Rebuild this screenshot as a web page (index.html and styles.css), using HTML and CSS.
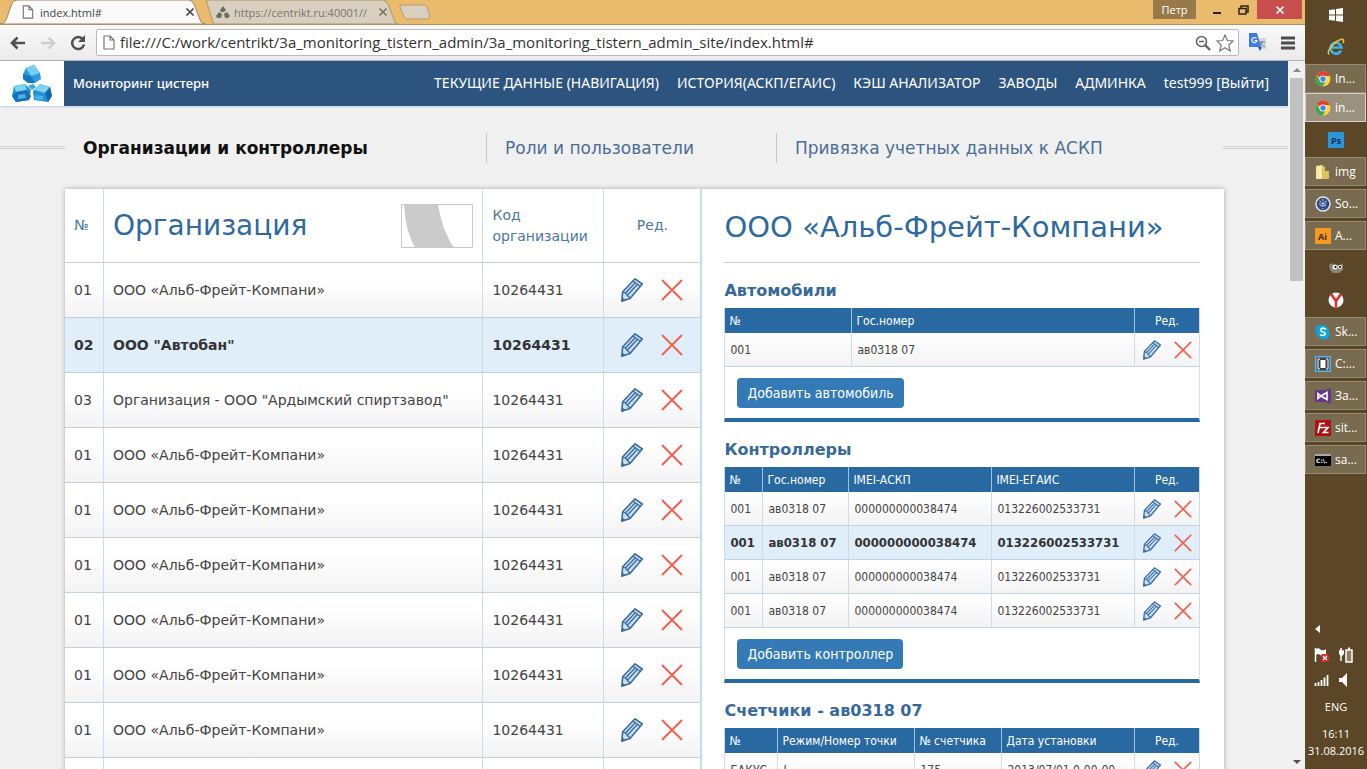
FILE: index.html
```html
<!DOCTYPE html>
<html lang="ru">
<head>
<meta charset="utf-8">
<title>Мониторинг цистерн</title>
<link rel="stylesheet" href="styles.css">
</head>
<body>
<svg class="sprite" aria-hidden="true">
  <symbol id="pencil" viewBox="0 0 22 24">
    <path d="M1.700 13.700 14 .8 21.300 6 9 20.500 .8 23.200Z" fill="#c9deef" stroke="#3a6c9e" stroke-width="1.600" stroke-linejoin="round"/>
    <path d="M12 3 19 8.300" fill="none" stroke="#3a6c9e" stroke-width="1.300"/>
    <path d="M4.500 15 14 5M6.500 17 16.300 6.500M2 14 4.500 15 6.500 17.500 9 20" fill="none" stroke="#3a6c9e" stroke-width="1.300"/>
    <path d="M.8 23.200 1.200 19.500 4.500 22Z" fill="#3a6c9e"/>
  </symbol>
  <symbol id="cross" viewBox="0 0 22 22"><path d="M1 1 21 21M21 1 1 21" fill="none" stroke="#f4604f" stroke-width="2"/></symbol>
  <symbol id="page" viewBox="0 0 12 15"><path d="M1 1H7L11 5V14H1ZM7 1V5H11" fill="#fff" stroke="#777" stroke-width="1.200"/></symbol>
  <symbol id="close" viewBox="0 0 10 10"><path d="M1.500 1.500 8.500 8.500M8.500 1.500 1.500 8.500" stroke="currentColor" stroke-width="1.700"/></symbol>
  <symbol id="chrome" viewBox="0 0 16 16">
    <circle cx="8" cy="8" r="7.500" fill="#ffd13b"/>
    <path d="M8 8 1.500 4.250A7.500 7.500 0 0 1 14.500 4.250L15 5H8Z" fill="#e04234"/>
    <path d="M1.500 4.250A7.500 7.500 0 0 0 7.700 15.500L10.800 10 8 8 5.300 9.500Z" fill="#3fa455"/>
    <circle cx="8" cy="8" r="3.600" fill="#fff"/><circle cx="8" cy="8" r="2.700" fill="#4286e8"/>
  </symbol>
</svg>

<div class="browser">
  <div class="tabstrip">
    <button class="btab on"><svg viewBox="0 0 212 24" preserveAspectRatio="none"><path d="M0 24Q5 24 7 18L12 4Q13 0 18 0H194Q198 0 200 5L206 20Q207 24 212 24Z" fill="#f9f9f9" stroke="#9b8560"/></svg><span class="btab-in"><svg width="12" height="14"><use href="#page"/></svg><span class="btab-name">index.html#</span><svg width="10" height="10"><use href="#close"/></svg></span></button>
    <button class="btab"><svg viewBox="0 0 200 24" preserveAspectRatio="none"><path d="M0 0H184Q188 0 190 5L196 20Q197 24 200 24H8Z" fill="#d8cfbe" stroke="#a8936b"/></svg><span class="btab-in"><svg width="14" height="14" viewBox="0 0 14 14"><path d="M4 5 7 1 10 5 8 7H5ZM0 11 3 7 6 9 5 13H1ZM8 9 11 7 14 11 12 13H9Z" fill="#6a6a66"/></svg><span class="btab-name">https://centrikt.ru:40001//</span><svg width="10" height="10"><use href="#close"/></svg></span></button>
    <button class="newtab" aria-label="Новая вкладка"><svg width="32" height="16" viewBox="0 0 32 16"><path d="M1 1H25Q27 1 28 3L31 13Q31 15 29 15H9Q6 15 5 13L1 3Z" fill="#d8cfbe" stroke="#b99a66"/></svg></button>
    <div class="win">
      <button class="user">Петр</button>
      <button class="wbtn" aria-label="Свернуть"><svg width="10" height="10"><path d="M1 8H9" stroke="#2d2415" stroke-width="2"/></svg></button>
      <button class="wbtn" aria-label="Развернуть"><svg width="11" height="10"><path d="M3 3V1H10V7H8M1 3.500H8V9H1Z" fill="none" stroke="#2d2415" stroke-width="1.500"/></svg></button>
      <button class="wclose" aria-label="Закрыть"><svg width="10" height="10"><use href="#close"/></svg></button>
    </div>
  </div>

  <div class="toolbar">
    <button aria-label="Назад"><svg width="16" height="14"><path d="M15 7H2M7.500 1.500 2 7 7.500 12.500" fill="none" stroke="#505050" stroke-width="2.600"/></svg></button>
    <button aria-label="Вперед"><svg width="16" height="14"><path d="M1 7H14M8.500 1.500 14 7 8.500 12.500" fill="none" stroke="#cdcdcd" stroke-width="2.400"/></svg></button>
    <button aria-label="Обновить"><svg width="16" height="16"><path d="M13 4.500A6 6 0 1 0 14 9.500" fill="none" stroke="#505050" stroke-width="2.500"/><path d="M15 0V7H8Z" fill="#505050"/></svg></button>
    <div class="address">
      <svg width="12" height="15"><use href="#page"/></svg>
      <input aria-label="Адрес" value="file:///C:/work/centrikt/3a_monitoring_tistern_admin/3a_monitoring_tistern_admin_site/index.html#">
      <svg width="16" height="16"><circle cx="6.500" cy="6.500" r="5" fill="none" stroke="#606060" stroke-width="1.600"/><path d="M4 6.500H9" stroke="#606060" stroke-width="1.500"/><path d="M10 10 15 15" stroke="#606060" stroke-width="2.400"/></svg>
      <svg width="18" height="18" viewBox="0 0 18 18"><path d="M9 1 11.400 6.500 17.200 7 12.800 11 14.200 17 9 13.800 3.800 17 5.200 11 .8 7 6.600 6.500Z" fill="none" stroke="#777" stroke-width="1.200"/></svg>
    </div>
    <button aria-label="Переводчик"><svg width="19" height="19" viewBox="0 0 19 19"><path d="M9 5H18V16H11Z" fill="#d3d6da"/><path d="M11 9H17M14 8V9Q13 13 10 14M12 10Q14 13 17 14" fill="none" stroke="#6b7e92"/><path d="M1 0H9L13 14H1Z" fill="#3e7be6"/><path d="M10 14H14L12 18Z" fill="#2b57b5"/><path d="M8.500 5.500A2.600 2.600 0 1 0 9 7.500H6.500" fill="none" stroke="#fff" stroke-width="1.200"/></svg></button>
    <button aria-label="Меню"><svg width="14" height="14"><path d="M0 2H14M0 7H14M0 12H14" stroke="#4d4d4d" stroke-width="3"/></svg></button>
  </div>

  <div class="viewport">
    <div class="site">
      <header class="head">
        <a class="logo" href="#" aria-label="Главная"><svg width="42" height="38" viewBox="0 0 42 38">
          <path d="M15 3 23 0 29 8 30 14 24 18 17 18 12 14 12 9Z" fill="#2b9ade"/><path d="M15 3 23 0 29 8 20 11Z" fill="#76cdf6"/><path d="M12 9 20 11 24 18 17 18 12 14Z" fill="#1878bd"/>
          <path d="M3 21 14 19 20 25 18 35 5 37 1 31Z" fill="#2590d6"/><path d="M3 21 14 19 16 25 5 27Z" fill="#7ed1f7"/><path d="M5 27 16 25 20 31 18 35 5 37 1 31Z" fill="#176fb5"/><path d="M7 30 14 29 15 33 7 34Z" fill="#45b2ea"/>
          <path d="M22 26 29 19 39 22 41 31 37 37 23 35Z" fill="#2590d6"/><path d="M23 25 29 19 39 22 34 28Z" fill="#7ed1f7"/><path d="M34 28 39 22 41 31 37 37Z" fill="#1467aa"/><path d="M24 30 32 31 32 35 24 34Z" fill="#45b2ea"/>
          <path d="M17 21 22 19 25 22 21 25Z" fill="#3ba5e0"/>
        </svg></a>
        <span class="brand">Мониторинг цистерн</span>
        <nav class="menu">
          <a href="#">ТЕКУЩИЕ ДАННЫЕ (НАВИГАЦИЯ)</a><a href="#">ИСТОРИЯ(АСКП/ЕГАИС)</a><a href="#">КЭШ АНАЛИЗАТОР</a><a href="#">ЗАВОДЫ</a><a href="#">АДМИНКА</a><a href="#">test999 [Выйти]</a>
        </nav>
      </header>

      <nav class="sections">
        <i class="rule"></i>
        <a class="on" href="#">Организации и контроллеры</a>
        <a class="roles" href="#">Роли и пользователи</a>
        <a class="binding" href="#">Привязка учетных данных к АСКП</a>
        <i class="rule"></i>
      </nav>

      <main class="panel">
        <table class="orgs">
          <colgroup><col class="o1"><col><col class="o3"><col class="o4"></colgroup>
          <thead><tr><th>№</th><th><div class="orghead"><span>Организация</span><svg width="72" height="44" viewBox="0 0 72 44"><path d="M3 0H37Q41 26 53 44H14Q4 26 3 0Z" fill="#cbcbcb"/><path d="M.5 .5H71.500V43.500H.5Z" fill="none" stroke="#c8c8c8"/></svg></div></th><th>Код организации</th><th class="mid">Ред.</th></tr></thead>
          <tbody id="orgs"></tbody>
        </table>

        <div class="detail">
          <h1>ООО «Альб-Фрейт-Компани»</h1>
          <section>
            <h2>Автомобили</h2>
            <table class="grid">
              <colgroup><col class="w127"><col><col class="w65"></colgroup>
              <thead><tr><th>№</th><th>Гос.номер</th><th class="mid">Ред.</th></tr></thead>
              <tbody id="cars"></tbody>
            </table>
            <div class="foot"><button class="add">Добавить автомобиль</button></div>
          </section>
          <section>
            <h2>Контроллеры</h2>
            <table class="grid">
              <colgroup><col class="w38"><col class="w86"><col class="w143"><col><col class="w65"></colgroup>
              <thead><tr><th>№</th><th>Гос.номер</th><th>IMEI-АСКП</th><th>IMEI-ЕГАИС</th><th class="mid">Ред.</th></tr></thead>
              <tbody id="controllers"></tbody>
            </table>
            <div class="foot"><button class="add">Добавить контроллер</button></div>
          </section>
          <section>
            <h2>Счетчики - ав0318 07</h2>
            <table class="grid">
              <colgroup><col class="w53"><col class="w137"><col class="w87"><col><col class="w65"></colgroup>
              <thead><tr><th>№</th><th>Режим/Номер точки</th><th>№ счетчика</th><th>Дата установки</th><th class="mid">Ред.</th></tr></thead>
              <tbody id="counters"></tbody>
            </table>
          </section>
        </div>
      </main>
    </div>
    <div class="scroll"><svg width="8" height="4"><path d="M0 4 4 0 8 4Z" fill="#8a8a8a"/></svg><i class="thumb"></i><svg width="8" height="4"><path d="M0 0H8L4 4Z" fill="#505050"/></svg></div>
  </div>
</div>

<aside class="taskbar">
  <button aria-label="Пуск"><svg width="14" height="14"><path d="M0 2 6 1.200V6.500H0ZM7 1 14 0V6.500H7ZM0 7.500H6V12.800L0 12ZM7 7.500H14V14L7 13Z" fill="#fff"/></svg></button>
  <button aria-label="Internet Explorer"><svg width="18" height="18" viewBox="0 0 18 18"><path d="M14 12.500A5.500 5.500 0 1 1 14.500 9.500H5" fill="none" stroke="#3db3ec" stroke-width="2.700"/><path d="M2 16.500C-1 13 8 3 14 1.500 17 .8 17 3 16 5" fill="none" stroke="#f1c53a" stroke-width="1.500"/></svg></button>
  <button class="app joined"><svg width="16" height="16"><use href="#chrome"/></svg>In...</button>
  <button class="app on"><svg width="16" height="16"><use href="#chrome"/></svg>in...</button>
  <button aria-label="Photoshop"><svg width="16" height="16"><rect width="16" height="16" rx="1" fill="#2a96dc"/><text x="3" y="12" class="glyph navy">Ps</text></svg></button>
  <button class="app"><svg width="16" height="16"><path d="M1 2 7 1V15H1Z" fill="#f3e7a0"/><path d="M7 1 10 3V7H14V15H7Z" fill="#d9c55f"/><path d="M5 3V14" stroke="#fff6c4"/></svg>img</button>
  <button class="app"><svg width="16" height="16"><circle cx="8" cy="8" r="7" fill="#29467f" stroke="#dfe5ef" stroke-width="1.500"/><path d="M8 3V13M3.500 8H12.500M4.500 5 11.500 11M11.500 5 4.500 11" stroke="#b9c8e4" stroke-width="1.200" stroke-dasharray="2 1"/></svg>So...</button>
  <button class="app"><svg width="16" height="16"><rect width="16" height="16" rx="1" fill="#f49a20"/><text x="3" y="12" class="glyph brown">Ai</text></svg>A...</button>
  <button aria-label="GIMP"><svg width="16" height="12"><path d="M1 3 4 1 6 3H12L15 1V8L11 11H5L2 8Z" fill="#8b8678"/><circle cx="7" cy="5" r="2.500" fill="#eee"/><circle cx="12" cy="5" r="2" fill="#eee"/><circle cx="7.500" cy="5" r="1"/><circle cx="12" cy="5" r="1"/></svg></button>
  <button aria-label="Яндекс"><svg width="16" height="16"><circle cx="8" cy="8" r="7.500" fill="#fff"/><path d="M3 2 8 9 13 2M8 8V15" fill="none" stroke="#dd3030" stroke-width="2.600"/></svg></button>
  <button class="app"><svg width="16" height="16"><path d="M4 1Q14 0 14 8 16 12 12 15 2 16 1 8-1 3 4 1Z" fill="#08a5e6"/><path d="M11 5.500Q8 3 6 5 5 7.500 8 8 11 8.500 10 10.500 8 12.500 5 10.500" fill="none" stroke="#fff" stroke-width="1.700"/></svg>Sk...</button>
  <button class="app"><svg width="16" height="16"><rect x=".5" y=".5" width="15" height="15" fill="#3f3f42" stroke="#55b7ec" stroke-width="2"/><path d="M5 3H3V13H5M11 3H13V13H11" fill="none" stroke="#fff"/><rect x="5.500" y="4" width="5" height="8" fill="#fff"/></svg>C:...</button>
  <button class="app"><svg width="16" height="16"><path d="M0 2H11L16 0V16L11 14H0Z" fill="#67358a"/><path d="M3 5.500V10.500L6 8 12 4.500V11.500L6 8Z" fill="none" stroke="#fff" stroke-width="1.600"/></svg>За...</button>
  <button class="app"><svg width="16" height="16"><rect width="16" height="16" fill="#b30f12"/><path d="M3 13 5 3.500H10M4 7.500H8M8 7.500H13L8.500 12.500H13.500" fill="none" stroke="#fff" stroke-width="1.700"/></svg>sit...</button>
  <button class="app"><svg width="16" height="12"><rect width="16" height="12" fill="#000"/><path d="M0 1H16" stroke="#aaa" stroke-width="2"/><text x="1" y="9" class="tiny">C:\.</text></svg>sa...</button>

  <div class="tray">
    <svg class="more" width="5" height="8"><path d="M5 0V8L0 4Z" fill="#fff"/></svg>
    <div class="pair">
      <svg width="16" height="16"><path d="M1.500 1V15" stroke="#fff" stroke-width="1.500"/><path d="M2 2Q5 0 7 3 10 4 12 2V8Q9 10 6 8 4 6 2 8Z" fill="#fff"/><rect x="7" y="7" width="8" height="8" rx="1.500" fill="#d92a2a"/><path d="M9 9 13 13M13 9 9 13" stroke="#fff" stroke-width="1.300"/></svg>
      <svg width="16" height="16"><path d="M3 1V14M1 4H6" stroke="#fff" stroke-width="1.500"/><path d="M1 4H6V7L4 9H3L1 7Z" fill="#fff"/><rect x="8" y="3" width="6" height="12" fill="#8d8069" stroke="#fff" stroke-width="1.500"/><path d="M10 1.500H12" stroke="#fff" stroke-width="2"/></svg>
    </div>
    <div class="pair">
      <svg width="16" height="12"><path d="M1.500 12V9M4.500 12V8M7.500 12V6M10.500 12V3.500M13.500 12V1" stroke="#fff" stroke-width="1.800"/></svg>
      <svg width="16" height="14"><path d="M1 5H4L9 0V14L4 9H1Z" fill="#fff"/></svg>
    </div>
    <div class="lang">ENG</div>
    <div>16:11</div>
    <div>31.08.2016</div>
  </div>
</aside>
<script src="app.js"></script>
</body>
</html>
```
FILE: styles.css
```css
* { box-sizing: border-box; }
body { margin: 0; height: 100vh; display: flex; overflow: hidden; font-family: "DejaVu Sans", sans-serif; font-size: 14px; color: #444; background: #f0f0f0; }
button { border: 0; padding: 0; background: none; font: inherit; color: inherit; display: flex; align-items: center; justify-content: center; }
a { color: inherit; text-decoration: none; }
svg { display: block; flex: none; }
.sprite { position: absolute; width: 0; height: 0; }

.browser { flex: 1; min-width: 0; display: flex; flex-direction: column; }
.tabstrip { height: 25px; flex: none; display: flex; align-items: flex-end; background: #ebbb6d; border-bottom: 1px solid #a8905f; font-family: "Open Sans", sans-serif; font-size: 11px; }
.btab { position: relative; width: 206px; height: 24px; color: #444; }
.btab + .btab { width: 192px; color: #7a766d; }
.btab > svg { position: absolute; inset: 0; width: 100%; height: 100%; }
.btab-in { position: relative; display: flex; align-items: center; gap: 6px; width: 100%; padding: 0 11px 0 22px; }
.btab + .btab .btab-in { gap: 4px; padding: 0 10px; }
.btab-name { flex: 1; min-width: 0; text-align: left; white-space: nowrap; }
.newtab { padding: 0 0 4px 1px; }
.win { margin-left: auto; height: 100%; display: flex; align-items: flex-start; }
.user { background: #98794a; color: #fff; width: 43px; height: 19px; }
.wbtn { width: 26px; height: 19px; }
.user + .wbtn { margin-left: 8px; }
.wclose { background: #c7504f; color: #fff; width: 45px; height: 19px; margin: 0 3px 0 1px; }
.toolbar { height: 36px; flex: none; display: flex; align-items: center; gap: 14px; padding: 0 10px; background: linear-gradient(#f9f9f9, #ebebeb); border-bottom: 1px solid #b2b2b2; }
.address { flex: 1; height: 27px; display: flex; align-items: center; gap: 5px; padding: 0 4px 0 6px; margin-left: -4px; margin-right: -5px; background: #fff; border: 1px solid #bbb; border-radius: 2px; }
.address input { flex: 1; min-width: 0; border: 0; padding: 0 0 2px; background: none; font: 15px "Open Sans", sans-serif; color: #333; }

.viewport { flex: 1; min-height: 0; display: flex; }
.site { flex: 1; min-width: 0; overflow: hidden; background: #f0f0f0; }
.scroll { width: 17px; display: flex; flex-direction: column; align-items: center; padding: 7px 0 5px; background: #f1f1f1; }
.thumb { width: 13px; height: 203px; margin: 6px 0 auto; background: #c1c1c1; }

.head { height: 45px; display: flex; align-items: center; background: #2d547e; color: #fff; box-shadow: 0 1px 2px #c5cfe4; font-family: "Noto Sans", sans-serif; font-size: 13px; font-weight: 500; }
.logo { width: 64px; height: 100%; background: #fff; display: flex; align-items: center; justify-content: center; }
.brand { padding: 0 0 2px 9px; }
.menu { margin-left: auto; display: flex; gap: 18px; padding: 0 19px 2px 0; font-size: 14px; font-weight: 400; white-space: nowrap; }

.sections { height: 83px; display: flex; align-items: center; font-size: 17px; color: #4b6d94; white-space: nowrap; }
.sections a { height: 30px; display: flex; align-items: center; padding-left: 18px; border-left: 1px solid #c6c6c6; flex: 1 0 0; }
.sections .on { flex-grow: 403; border-left: 0; font-weight: bold; color: #111; }
.sections .roles { flex-grow: 271; }
.sections .binding { flex-grow: 428; }
.rule { flex: none; width: 65px; height: 3px; border: solid #cfcfcf; border-width: 1px 0; }

.panel { margin: 0 64px 0 65px; min-height: 600px; display: flex; align-items: stretch; background: #fff; box-shadow: 0 0 5px #aaa; }
table { border-collapse: separate; border-spacing: 0; table-layout: fixed; width: 100%; }
td, th { text-align: left; font-weight: normal; }
.orgs { width: 55%; flex: none; align-self: flex-start; border-right: 2px solid #c5d9ec; }
.o1 { width: 39px; } .o3 { width: 121px; } .o4 { width: 96px; }
.orgs th { height: 74px; color: #4b76a3; line-height: 21px; }
.orgs td { height: 55px; background: linear-gradient(#fff 30%, #f3f3f3); }
.orgs th, .orgs td { padding: 0 9px; border-bottom: 1px solid #c4cfda; border-right: 1px solid #cddae7; }
.orgs th:last-child, .orgs td:last-child { border-right: 0; padding: 0; }
.orgs th.mid { text-align: center; }
.orghead { display: flex; align-items: center; justify-content: space-between; font-size: 28px; line-height: 36px; color: #2e6a9f; }
.orgs .sel td, .grid .sel td { background: #e0eefa; font-weight: bold; color: #333; }
.acts { display: flex; align-items: center; justify-content: center; gap: 18px; }
.orgs .acts svg { width: 22px; height: 24px; }
.orgs .acts button + button svg { width: 22px; height: 22px; }

.detail { flex: 1; min-width: 0; padding: 0 24px 0 22px; color: #444; }
h1 { margin: 0 0 14px; height: 74px; line-height: 76px; font-size: 29px; font-weight: normal; color: #2e6a9f; border-bottom: 1px solid #ccc; white-space: nowrap; }
h2 { margin: 0; font-size: 16px; line-height: 28px; height: 31px; color: #37699b; }
section { margin-bottom: 14px; }
.grid { font-family: "DejaVu Sans Condensed", "Noto Sans", sans-serif; font-size: 12px; border-left: 1px solid #cddae7; border-right: 1px solid #cddae7; }
.grid th { height: 25px; background: #2969a2; color: #fff; padding: 0 0 0 4px; border-left: 1px solid #9fc0de; white-space: nowrap; }
.grid td { height: 34px; padding: 0 0 0 5px; background: linear-gradient(#fff, #f3f3f3); border-bottom: 1px solid #c4d3e2; border-left: 1px solid #cddae7; white-space: nowrap; }
.grid .sel td { font-size: 13px; }
.grid th:first-child, .grid td:first-child { border-left: 0; }
.grid th.mid { padding: 0; text-align: center; }
.grid td:last-child { padding: 0; }
.grid .acts { gap: 13px; }
.grid .acts svg { width: 18px; height: 20px; }
.grid .acts button + button svg { width: 18px; height: 18px; }
.w38 { width: 37px; } .w53 { width: 52px; } .w65 { width: 65px; } .w86 { width: 86px; } .w87 { width: 87px; }
.w127 { width: 126px; } .w137 { width: 137px; } .w143 { width: 143px; }
.foot { height: 55px; padding: 11px 12px; border: 1px solid #dadfe5; border-top: 0; border-bottom: 4px solid #2969a2; }
.add { height: 30px; padding: 0 10px; border-radius: 4px; background: #337ab7; color: #fff; font-family: "DejaVu Sans Condensed", "Noto Sans", sans-serif; font-size: 14px; }

.taskbar { width: 62px; flex: none; display: flex; flex-direction: column; gap: 3px; background: #5b4727; color: #fff; font-family: "Open Sans", sans-serif; font-size: 12px; }
.taskbar button { height: 29px; flex: none; }
.taskbar .app { justify-content: flex-start; gap: 4px; padding-left: 9px; margin-right: 1px; background: #796b50; border: 1px solid #958a72; }
.taskbar .joined { margin-bottom: -3px; }
.taskbar .app.on { background: #9b917f; border-color: #d6d1c6; }
.glyph { font: bold 9px "Open Sans", sans-serif; }
.navy { fill: #0b2a4a; } .brown { fill: #4a2600; }
.tiny { font: bold 6px "DejaVu Sans", sans-serif; fill: #fff; }
.tray { margin-top: auto; display: flex; flex-direction: column; align-items: center; font-size: 11px; line-height: 17px; padding-bottom: 10px; }
.more { align-self: flex-start; margin: 0 0 9px 10px; }
.pair { display: flex; align-items: center; gap: 8px; height: 25px; margin-right: 5px; }
.lang { margin: 6px 0 10px; }
```
FILE: app.js
```js
const actions = (label) =>
  `<div class="acts"><button aria-label="Редактировать ${label}"><svg><use href="#pencil"/></svg></button>` +
  `<button aria-label="Удалить ${label}"><svg><use href="#cross"/></svg></button></div>`;

function fill(id, rows, selected) {
  document.getElementById(id).innerHTML = rows.map((row, i) =>
    `<tr${i === selected ? ' class="sel"' : ''}>` +
    row.map((cell) => `<td>${cell}</td>`).join('') +
    `<td>${actions(row[0])}</td></tr>`).join('');
}

const alb = ['01', 'ООО «Альб-Фрейт-Компани»', '10264431'];
const device = ['001', 'ав0318 07', '000000000038474', '013226002533731'];

fill('orgs', [
  alb,
  ['02', 'ООО "Автобан"', '10264431'],
  ['03', 'Организация - ООО "Ардымский спиртзавод"', '10264431'],
  alb, alb, alb, alb, alb, alb, alb
], 1);
fill('cars', [['001', 'ав0318 07']], -1);
fill('controllers', [device, device, device, device], 1);
fill('counters', [['БАКУС', 'I', '175', '2013/07/01 0-00-00']], -1);
```
